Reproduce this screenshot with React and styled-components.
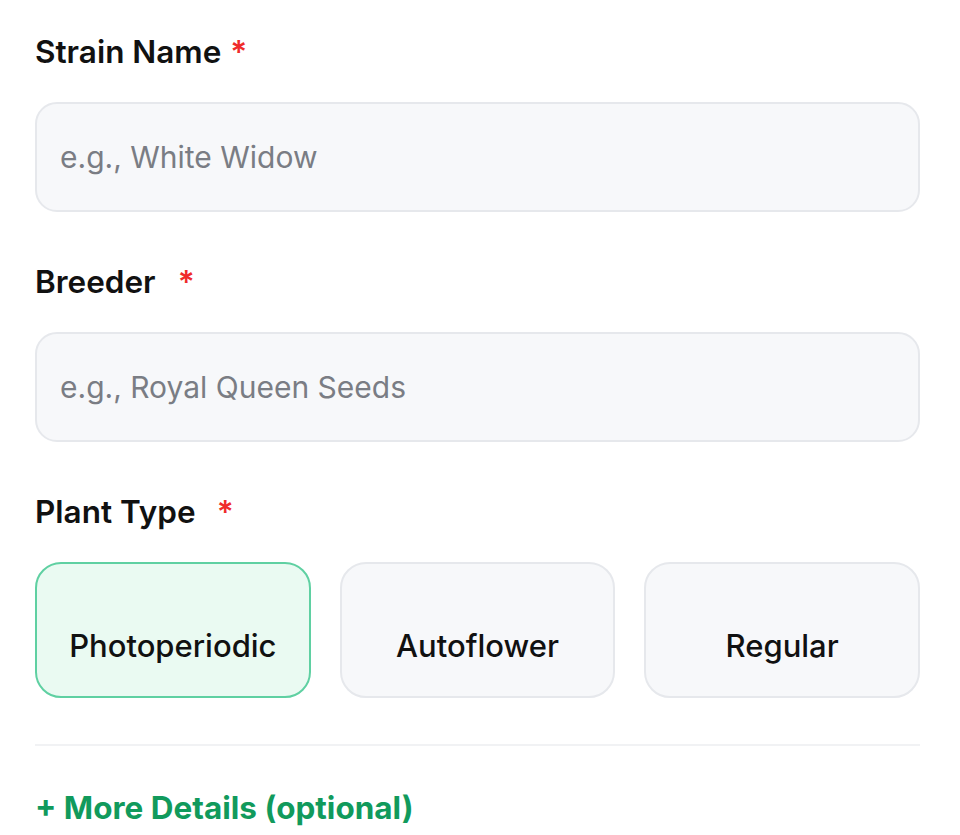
import React, { useState } from "react";
import styled, { createGlobalStyle } from "styled-components";

const GlobalStyle = createGlobalStyle`
  body {
    margin: 0;
    background: #ffffff;
    font-family: Inter, "Liberation Sans", sans-serif;
  }
`;

const Form = styled.form`
  width: 885px;
  padding: 30px 0 0 35px;
  display: flex;
  flex-direction: column;
`;

const Field = styled.div`
  display: flex;
  flex-direction: column;
  margin-bottom: ${(p) => (p.$last ? 0 : 48)}px;
`;

const Label = styled.label`
  font-size: 31.5px;
  font-weight: 600;
  color: #111111;
  line-height: 44px;
  margin-bottom: 28px;
`;

const Required = styled.span`
  color: #ef2b2b;
  margin-left: ${(p) => p.$gap}px;
`;

const Input = styled.input`
  box-sizing: border-box;
  width: 100%;
  height: 110px;
  padding: 0 23px;
  border: 2px solid #e6e8ec;
  border-radius: 22px;
  background: #f7f8fa;
  font-family: inherit;
  font-size: 30px;
  color: #111;
  outline: none;

  &::placeholder {
    color: #7a7d84;
  }
`;

const TypeRow = styled.div`
  display: grid;
  grid-template-columns: repeat(3, 1fr);
  gap: 29px;
`;

const TypeButton = styled.button`
  height: 136px;
  display: flex;
  align-items: flex-end;
  justify-content: center;
  padding: 0 0 31px;
  border-radius: 26px;
  border: 2px solid ${(p) => (p.$active ? "#5fd0a2" : "#e6e8ec")};
  background: ${(p) => (p.$active ? "#eafaf2" : "#f7f8fa")};
  font-family: inherit;
  font-size: 31px;
  font-weight: 500;
  line-height: 38px;
  color: #111;
  cursor: pointer;
`;

const Divider = styled.hr`
  border: none;
  border-top: 2px solid #f1f2f4;
  margin: 46px 0 0;
`;

const MoreLink = styled.button`
  align-self: flex-start;
  margin-top: 43px;
  padding: 0;
  border: none;
  background: none;
  font-family: inherit;
  font-size: 31.5px;
  font-weight: 700;
  line-height: 38px;
  color: #119a5c;
  cursor: pointer;
`;

const types = ["Photoperiodic", "Autoflower", "Regular"];

export default function App() {
  const [type, setType] = useState("Photoperiodic");

  return (
    <>
      <GlobalStyle />
      <Form onSubmit={(e) => e.preventDefault()}>
        <Field>
          <Label>
            Strain Name<Required $gap={9}>*</Required>
          </Label>
          <Input placeholder="e.g., White Widow" />
        </Field>

        <Field>
          <Label>
            Breeder<Required $gap={22}>*</Required>
          </Label>
          <Input placeholder="e.g., Royal Queen Seeds" />
        </Field>

        <Field $last>
          <Label>
            Plant Type<Required $gap={21}>*</Required>
          </Label>
          <TypeRow>
            {types.map((t) => (
              <TypeButton
                key={t}
                type="button"
                $active={type === t}
                onClick={() => setType(t)}
              >
                {t}
              </TypeButton>
            ))}
          </TypeRow>
        </Field>

        <Divider />
        <MoreLink type="button">+ More Details (optional)</MoreLink>
      </Form>
    </>
  );
}
